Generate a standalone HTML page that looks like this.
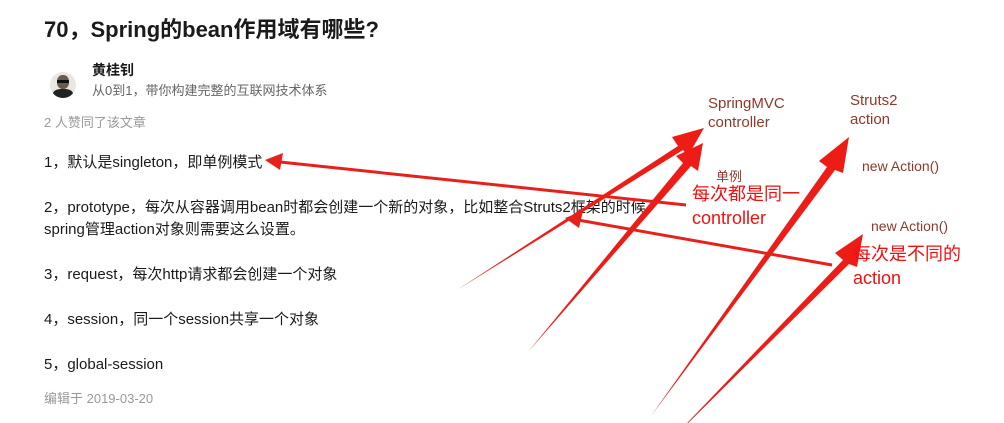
<!DOCTYPE html>
<html><head><meta charset="utf-8"><style>
body{margin:0;width:1004px;height:423px;background:#fff;position:relative;overflow:hidden;font-family:"Liberation Sans","Noto Sans CJK SC",sans-serif;}
.t{position:absolute;white-space:nowrap;}
.b{font-size:15px;color:#1a1a1a;}
</style></head><body>
<div class="t" style="left:44px;top:12px;font-size:22px;font-weight:bold;color:#1a1a1a;">70，Spring的bean作用域有哪些?</div>
<div style="position:absolute;left:50px;top:72px;width:26px;height:26px;border-radius:50%;background:#e8e8e0;overflow:hidden">
<div style="position:absolute;left:7px;top:3px;width:12px;height:14px;border-radius:45%;background:#6a5a50"></div>
<div style="position:absolute;left:7px;top:8px;width:12px;height:3px;background:#111"></div>
<div style="position:absolute;left:3px;top:17px;width:20px;height:12px;border-radius:40%;background:#222"></div></div>
<div class="t" style="left:92px;top:60px;font-size:14px;font-weight:bold;color:#1a1a1a;">黄桂钊</div>
<div class="t" style="left:92px;top:80px;font-size:13px;color:#666;">从0到1，带你构建完整的互联网技术体系</div>
<div class="t" style="left:44px;top:112px;font-size:13px;color:#999;">2 人赞同了该文章</div>
<div class="t b" style="left:44px;top:151px;">1，默认是singleton，即单例模式</div>
<div class="t b" style="left:44px;top:196px;">2，prototype，每次从容器调用bean时都会创建一个新的对象，比如整合Struts2框架的时候，</div>
<div class="t b" style="left:44px;top:218px;">spring管理action对象则需要这么设置。</div>
<div class="t b" style="left:44px;top:263px;">3，request，每次http请求都会创建一个对象</div>
<div class="t b" style="left:44px;top:308px;">4，session，同一个session共享一个对象</div>
<div class="t b" style="left:44px;top:353px;">5，global-session</div>
<div class="t" style="left:44px;top:388px;font-size:13px;color:#999;">编辑于 2019-03-20</div>
<svg width="1004" height="423" style="position:absolute;left:0;top:0">
<g fill="#ee1c16">
<polygon points="457,290 678,146 672,137 704,128 688,156 683,150"/>
<polygon points="528,352 683,163 676,156 703,143 698,171 691,166"/>
<polygon points="651,416 827,167 819,161 849,137 843,173 835,170"/>
<polygon points="669,442 843,260 835,253 863,234 857,267 849,264"/>
</g>
<g stroke="#e8201c" stroke-width="3" fill="#e8201c">
<line x1="686" y1="205" x2="280" y2="162"/>
<line x1="832" y1="265" x2="578" y2="220"/>
</g>
<polygon points="265,160 283,153 280,170" fill="#e8201c"/>
<polygon points="565,218 583,211 579,228" fill="#e8201c"/>
</svg>
<div class="t" style="left:708px;top:94px;font-size:15px;color:#8b3a2a;line-height:19px;">SpringMVC<br>controller</div>
<div class="t" style="left:850px;top:91px;font-size:15px;color:#8b3a2a;line-height:19px;">Struts2<br>action</div>
<div class="t" style="left:716px;top:166px;font-size:13px;color:#8b3a2a;">单例</div>
<div class="t" style="left:692px;top:182px;font-size:18px;color:#f01010;line-height:24px;">每次都是同一<br>controller</div>
<div class="t" style="left:862px;top:158px;font-size:14px;color:#8b3a2a;">new Action()</div>
<div class="t" style="left:871px;top:218px;font-size:14px;color:#8b3a2a;">new Action()</div>
<div class="t" style="left:853px;top:242px;font-size:18px;color:#f01010;line-height:24px;">每次是不同的<br>action</div>
</body></html>
